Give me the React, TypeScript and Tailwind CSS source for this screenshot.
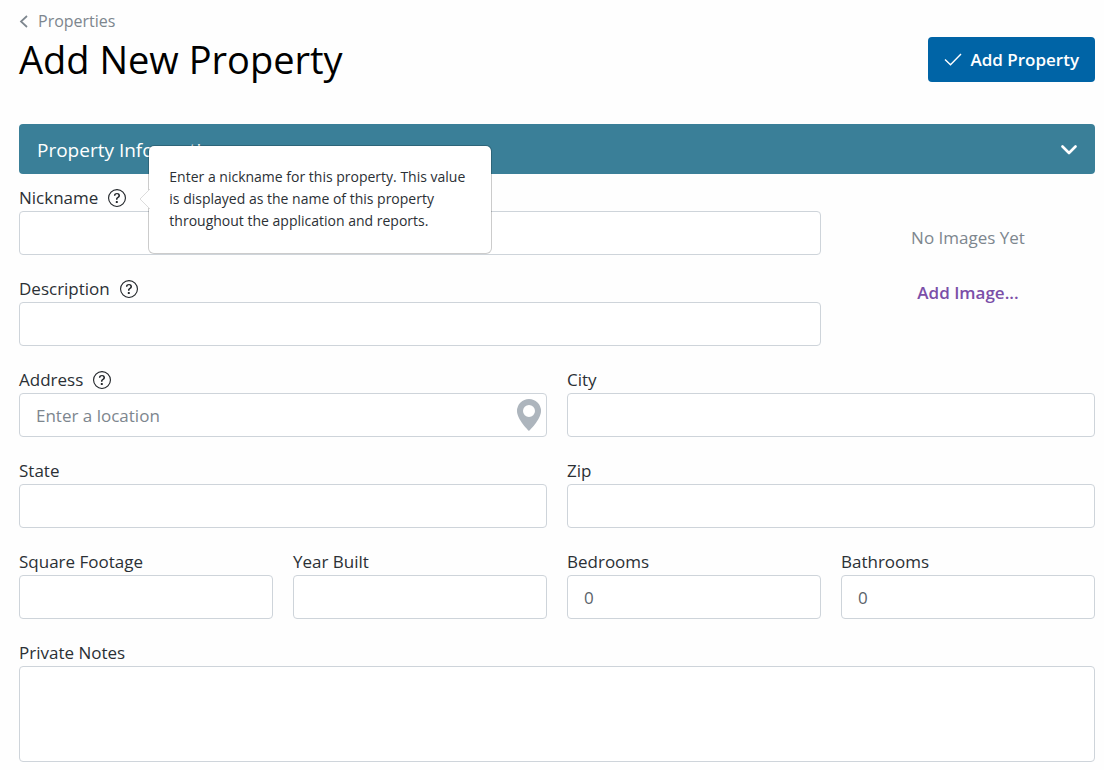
import React, { useState } from 'react';
import { BsGeoAltFill, BsQuestionCircle } from 'react-icons/bs';

interface FieldProps {
  id: string;
  label: string;
  help?: React.ReactNode;
  className?: string;
  children: React.ReactNode;
}

const inputClass =
  'block w-full h-11 px-4 bg-white border border-[#ced4da] rounded text-[17px] text-[#5c636a] placeholder:text-[#7d868e] placeholder:opacity-100 outline-none focus:border-[#3a7f98]';

const Field: React.FC<FieldProps> = ({ id, label, help, className, children }) => (
  <div className={className}>
    <div className="flex items-center gap-2.5 h-6 mb-px">
      <label htmlFor={id} className="leading-6">
        {label}
      </label>
      {help}
    </div>
    {children}
  </div>
);

const HelpButton: React.FC<{ label: string; onClick?: () => void; children?: React.ReactNode }> = ({
  label,
  onClick,
  children,
}) => (
  <span className="relative flex">
    <button type="button" aria-label={label} onClick={onClick} className="cursor-pointer text-[#212529]">
      <BsQuestionCircle size={18} />
    </button>
    {children}
  </span>
);

const Popover: React.FC<{ children: React.ReactNode }> = ({ children }) => (
  <div
    role="tooltip"
    className="absolute left-full top-1/2 z-10 ml-[22px] -mt-[53px] w-[344px] rounded-md border border-black/20 bg-white bg-clip-padding px-5 pt-5 pb-[21px] text-[14px] leading-[22px]"
  >
    {/* Arrow */}
    <svg className="absolute -left-[10px] top-[43px]" width="11" height="20" viewBox="0 0 11 20">
      <path d="M11 0 L1 10 L11 20" fill="#fff" stroke="#dcdcdc" />
    </svg>
    {children}
  </div>
);

const App: React.FC = () => {
  const [showHelp, setShowHelp] = useState(true);
  const [open, setOpen] = useState(true);

  return (
    <div className="min-h-screen bg-[#fefefe] pl-[19px] pr-[9px] pt-[9px] pb-2 font-['Open_Sans','Noto_Sans',sans-serif] text-[17px] text-[#2b3035]">
      {/* Header */}
      <header className="flex items-end justify-between">
        <div>
          <a href="#properties" className="flex items-center gap-2 text-[16px] leading-6 text-[#7d868e]">
            <svg width="11" height="13" viewBox="0 0 11 13" fill="none" stroke="currentColor" strokeWidth="1.7">
              <path d="M8 1 L2 6.5 L8 12" />
            </svg>
            Properties
          </a>
          <h1 className="text-[38px] leading-[52px] text-black">Add New Property</h1>
        </div>
        <button
          type="button"
          className="mb-[3px] flex h-[45px] cursor-pointer items-center gap-2 rounded bg-[#0064a6] px-4 font-semibold text-white"
        >
          <svg width="18" height="14" viewBox="0 0 18 14" fill="none" stroke="currentColor" strokeWidth="1.4">
            <path d="M1 6.5 L6.5 11.7 L17 1.1" />
          </svg>
          Add Property
        </button>
      </header>

      <form className="mt-[39px]">
        <button
          type="button"
          aria-expanded={open}
          onClick={() => setOpen(!open)}
          className="flex h-[50px] w-full cursor-pointer items-center justify-between rounded bg-[#3a7f98] px-[18px] pt-0.5 text-[19px] text-white"
        >
          Property Information
          <svg width="16" height="10" viewBox="0 0 16 10" fill="none" stroke="currentColor" strokeWidth="2.6" strokeLinecap="round" strokeLinejoin="round">
            <path d="M1.5 1.5 L8 8 L14.5 1.5" />
          </svg>
        </button>

        {open && (
          <div className="mt-3 grid grid-cols-4 gap-x-5 gap-y-[22px]">
            <div className="col-span-3 flex flex-col gap-[22px]">
              <Field
                id="nickname"
                label="Nickname"
                help={
                  <HelpButton label="Nickname help" onClick={() => setShowHelp(!showHelp)}>
                    {showHelp && (
                      <Popover>
                        Enter a nickname for this property. This value is displayed as the name of this
                        property throughout the application and reports.
                      </Popover>
                    )}
                  </HelpButton>
                }
              >
                <input id="nickname" type="text" className={inputClass} />
              </Field>
              <Field id="description" label="Description" help={<HelpButton label="Description help" />}>
                <input id="description" type="text" className={inputClass} />
              </Field>
            </div>

            {/* Images */}
            <div className="flex flex-col items-center gap-[31px] pt-10">
              <span className="leading-6 text-[#7d868e]">No Images Yet</span>
              <button type="button" className="cursor-pointer font-semibold leading-6 text-[#7b4fa8]">
                Add Image...
              </button>
            </div>

            <Field
              id="address"
              label="Address"
              help={<HelpButton label="Address help" />}
              className="col-span-2"
            >
              <div className="relative">
                <input id="address" type="text" placeholder="Enter a location" className={inputClass} />
                <BsGeoAltFill size={32} className="absolute right-[2px] top-[6px] text-[#adb5bd]" />
              </div>
            </Field>
            <Field id="city" label="City" className="col-span-2">
              <input id="city" type="text" className={inputClass} />
            </Field>
            <Field id="state" label="State" className="col-span-2">
              <input id="state" type="text" className={inputClass} />
            </Field>
            <Field id="zip" label="Zip" className="col-span-2">
              <input id="zip" type="text" className={inputClass} />
            </Field>

            <Field id="square-footage" label="Square Footage">
              <input id="square-footage" type="text" className={inputClass} />
            </Field>
            <Field id="year-built" label="Year Built">
              <input id="year-built" type="text" className={inputClass} />
            </Field>
            <Field id="bedrooms" label="Bedrooms">
              <input id="bedrooms" type="text" defaultValue="0" className={inputClass} />
            </Field>
            <Field id="bathrooms" label="Bathrooms">
              <input id="bathrooms" type="text" defaultValue="0" className={inputClass} />
            </Field>

            <Field id="notes" label="Private Notes" className="col-span-4">
              <textarea
                id="notes"
                rows={3}
                className="block h-24 w-full resize-none rounded border border-[#ced4da] bg-white px-4 py-2 text-[#5c636a] outline-none focus:border-[#3a7f98]"
              />
            </Field>
          </div>
        )}
      </form>
    </div>
  );
};

export default App;
